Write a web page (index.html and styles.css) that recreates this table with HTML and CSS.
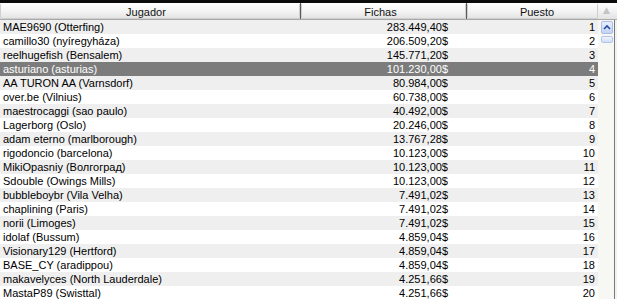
FILE: index.html
```html
<!DOCTYPE html>
<html lang="es">
<head>
<meta charset="utf-8">
<title>Jugadores</title>
<link rel="stylesheet" href="styles.css">
</head>
<body>
<div class="frame">
  <div class="topbar"></div>
  <div class="header">
    <div class="hcell h-player">Jugador</div>
    <div class="hsep"></div>
    <div class="hcell h-chips">Fichas</div>
    <div class="hsep"></div>
    <div class="hcell h-rank">Puesto</div>
    <div class="hcorner"><span class="sort">▲</span></div>
  </div>
  <div class="body">
    <div class="rows">
      <div class="row"><span class="c-player">MAE9690 (Otterfing)</span><span class="c-chips">283.449,40$</span><span class="c-rank">1</span></div>
      <div class="row"><span class="c-player">camillo30 (nyíregyháza)</span><span class="c-chips">206.509,20$</span><span class="c-rank">2</span></div>
      <div class="row"><span class="c-player">reelhugefish (Bensalem)</span><span class="c-chips">145.771,20$</span><span class="c-rank">3</span></div>
      <div class="row selected"><span class="c-player">asturiano (asturias)</span><span class="c-chips">101.230,00$</span><span class="c-rank">4</span></div>
      <div class="row"><span class="c-player">AA TURON AA (Varnsdorf)</span><span class="c-chips">80.984,00$</span><span class="c-rank">5</span></div>
      <div class="row"><span class="c-player">over.be (Vilnius)</span><span class="c-chips">60.738,00$</span><span class="c-rank">6</span></div>
      <div class="row"><span class="c-player">maestrocaggi (sao paulo)</span><span class="c-chips">40.492,00$</span><span class="c-rank">7</span></div>
      <div class="row"><span class="c-player">Lagerborg (Oslo)</span><span class="c-chips">20.246,00$</span><span class="c-rank">8</span></div>
      <div class="row"><span class="c-player">adam eterno (marlborough)</span><span class="c-chips">13.767,28$</span><span class="c-rank">9</span></div>
      <div class="row"><span class="c-player">rigodoncio (barcelona)</span><span class="c-chips">10.123,00$</span><span class="c-rank">10</span></div>
      <div class="row"><span class="c-player">MikiOpasniy (Волгоград)</span><span class="c-chips">10.123,00$</span><span class="c-rank">11</span></div>
      <div class="row"><span class="c-player">Sdouble (Owings Mills)</span><span class="c-chips">10.123,00$</span><span class="c-rank">12</span></div>
      <div class="row"><span class="c-player">bubbleboybr (Vila Velha)</span><span class="c-chips">7.491,02$</span><span class="c-rank">13</span></div>
      <div class="row"><span class="c-player">chaplining (Paris)</span><span class="c-chips">7.491,02$</span><span class="c-rank">14</span></div>
      <div class="row"><span class="c-player">norii (Limoges)</span><span class="c-chips">7.491,02$</span><span class="c-rank">15</span></div>
      <div class="row"><span class="c-player">idolaf (Bussum)</span><span class="c-chips">4.859,04$</span><span class="c-rank">16</span></div>
      <div class="row"><span class="c-player">Visionary129 (Hertford)</span><span class="c-chips">4.859,04$</span><span class="c-rank">17</span></div>
      <div class="row"><span class="c-player">BASE_CY (aradippou)</span><span class="c-chips">4.859,04$</span><span class="c-rank">18</span></div>
      <div class="row"><span class="c-player">makavelyces (North Lauderdale)</span><span class="c-chips">4.251,66$</span><span class="c-rank">19</span></div>
      <div class="row"><span class="c-player">MastaP89 (Swisttal)</span><span class="c-chips">4.251,66$</span><span class="c-rank">20</span></div>
    </div>
    <div class="scrollbar">
      <div class="track">
        <div class="btn-up">
          <svg width="10" height="11" viewBox="0 0 10 11"><path d="M2 7 L5 4 L8 7" fill="none" stroke="#2a4a9a" stroke-width="1.6"/></svg>
        </div>
        <div class="thumb"></div>
      </div>
      <div class="edge"></div>
    </div>
  </div>
</div>
</body>
</html>
```
FILE: styles.css
```css
* { box-sizing: border-box; }
html, body {
  margin: 0;
  padding: 0;
  background: #ffffff;
  overflow: hidden;
}
.frame {
  width: 617px;
  height: 299px;
  display: flex;
  flex-direction: column;
  font-family: "Liberation Sans", Arial, sans-serif;
  font-size: 11px;
  color: #000;
  overflow: hidden;
}
.topbar {
  height: 3px;
  background: #0c0c0c;
  flex: none;
}
.header {
  display: flex;
  height: 17px;
  flex: none;
  background: linear-gradient(#ffffff, #f4f4f4 45%, #e2e2e2);
  border-bottom: 1px solid #a8a8a8;
}
.hcell {
  height: 16px;
  line-height: 16px;
  text-align: center;
  border: 1px solid #cfcfcf;
  border-top-color: #ffffff;
  border-radius: 2px;
  background: linear-gradient(#ffffff, #f6f6f6 45%, #e4e4e4);
  color: #111;
  flex: none;
}
.hsep {
  width: 1px;
  background: #5a5a5a;
  height: 16px;
  flex: none;
}
.h-player { width: 300px; padding-right: 8px; }
.h-chips { width: 165px; padding-right: 6px; }
.h-rank { width: 131px; padding-left: 9px; }
.hcorner {
  flex: 1;
  position: relative;
  height: 16px;
}
.sort {
  position: absolute;
  left: 5px;
  top: 2px;
  font-size: 9px;
  color: #c4c4c4;
  font-family: "DejaVu Sans", sans-serif;
}
.body {
  display: flex;
  flex: 1;
  min-height: 0;
}
.rows {
  width: 598px;
  flex: none;
  display: flex;
  flex-direction: column;
}
.row {
  display: flex;
  height: 14px;
  line-height: 14px;
  flex: none;
  white-space: nowrap;
}
.row:nth-child(odd) { background: #efefef; }
.row:nth-child(even) { background: #ffffff; }
.row.selected {
  background: #7c7c7c;
  color: #ffffff;
}
.c-player {
  width: 301px;
  padding-left: 3px;
  flex: none;
}
.c-chips {
  width: 166px;
  text-align: right;
  padding-right: 19px;
  flex: none;
}
.c-rank {
  width: 131px;
  text-align: right;
  padding-right: 3px;
  flex: none;
}
.scrollbar {
  width: 19px;
  flex: none;
  display: flex;
  align-self: stretch;
}
.track {
  width: 16px;
  flex: none;
  background: #f7f7f3;
  display: flex;
  flex-direction: column;
  align-items: flex-start;
  padding-top: 1px;
  padding-left: 3px;
}
.btn-up {
  width: 12px;
  height: 13px;
  flex: none;
  border: 1px solid #a9bde8;
  border-radius: 2px;
  background: linear-gradient(#e8effe, #c2d3f7);
  display: flex;
  align-items: center;
  justify-content: center;
}
.thumb {
  margin-top: 2px;
  width: 12px;
  height: 7px;
  flex: none;
  border: 1px solid #b3c4ec;
  border-radius: 2px;
  background: linear-gradient(#f1f5fe, #d0ddfa);
}
.edge {
  width: 3px;
  flex: none;
  border-left: 1px solid #7a7a7a;
  background: #f2f2f2;
}
```
